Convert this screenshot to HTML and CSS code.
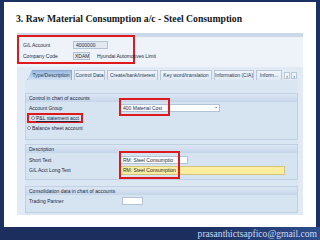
FILE: index.html
```html
<!DOCTYPE html>
<html lang="en">
<head>
    <meta charset="UTF-8">
    <title>Raw Material Consumption a/c - Steel Consumption</title>
    <link rel="stylesheet" href="styles.css">
</head>
<body>
    <div class="slide">
        <h1 class="title">3. Raw Material Consumption a/c - Steel Consumption</h1>

        <div class="sap">
            <div class="sap-head">
                <div class="head-box">
                    <div class="hrow"><span class="hlbl">G/L Account</span><span class="fld ro w35">4000000</span></div>
                    <div class="hrow"><span class="hlbl">Company Code</span><span class="fld ro w17">XDAM</span><span class="hdesc">Hyundai Automotives Limit</span></div>
                </div>
            </div>

            <div class="tabs">
                <div class="tab active t1">Type/Description</div>
                <div class="tab t2">Control Data</div>
                <div class="tab t3">Create/bank/interest</div>
                <div class="tab t4">Key word/translation</div>
                <div class="tab t5">Information (C/A)</div>
                <div class="tab t6">Inform...</div>
                <div class="tab-nav"><span>‹</span><span>›</span></div>
            </div>

            <div class="panel">
                <div class="grp g1">
                    <div class="grp-title">Control in chart of accounts</div>
                    <div class="grp-body">
                        <div class="row"><span class="lbl">Account Group</span>
                            <span class="select">400 Material Cost<span class="arrow">▪</span><span class="mark mark-ag"></span></span>
                        </div>
                        <div class="row radio-row"><span class="pl"><span class="radio on"></span><u>P&amp;L statement acct</u></span></div>
                        <div class="row radio-row"><span class="radio"></span>Balance sheet account</div>
                    </div>
                </div>

                <div class="grp g2">
                    <div class="grp-title">Description</div>
                    <div class="grp-body">
                        <div class="row"><span class="lbl">Short Text</span><span class="fld short">RM: Steel Consumptio</span></div>
                        <div class="row"><span class="lbl">G/L Acct Long Text</span><span class="fld long">RM: Steel Consumption</span></div>
                    </div>
                    <span class="mark mark-desc"></span>
                </div>

                <div class="grp g3">
                    <div class="grp-title">Consolidation data in chart of accounts</div>
                    <div class="grp-body">
                        <div class="row"><span class="lbl">Trading Partner</span><span class="fld partner"></span></div>
                    </div>
                </div>
            </div>
        </div>
    </div>

    <div class="footer">prasanthictsapfico@gmail.com</div>
</body>
</html>
```

FILE: styles.css
```css
* {
    box-sizing: border-box;
    margin: 0;
    padding: 0;
}
html, body {
    width: 320px;
    height: 240px;
    overflow: hidden;
}
body {
    background: #1c3062;
    font-family: "Liberation Sans", Arial, sans-serif;
}
.slide {
    margin: 2px 4px 0;
    height: 225px;
    background: #fff;
    padding-top: 12px;
}
.title {
    font: bold 9.7px/10px "Liberation Serif", serif;
    color: #161616;
    padding-left: 12px;
    white-space: nowrap;
}

/* sap screenshot */
.sap {
    margin: 9px 0 0 13px;
    width: 286px;
    height: 182px;
    background: #e2ebf5;
    font-size: 5px;
    color: #1f2b3c;
    white-space: nowrap;
}
.sap-head {
    height: 34px;
    padding-top: 2px;
    background: linear-gradient(#cbd9ea 0 4px, #eef3f9 4px);
}
.head-box {
    width: 118px;
    height: 29px;
    border: 2px solid #e0191f;
    padding: 2px 0 0 4px;
}
.hrow {
    display: flex;
    align-items: center;
    height: 11px;
}
.hrow > span,
.row > span {
    flex-shrink: 0;
}
.hlbl {
    width: 50px;
}
.fld {
    height: 8px;
    line-height: 6px;
    padding: 0 2px;
    border: 1px solid #b3c2d4;
    background: #fff;
    white-space: nowrap;
    overflow: hidden;
}
.fld.ro {
    background: #e3e9f0;
}
.w35 { width: 35px; }
.w17 { width: 17px; padding: 0 1px; }
.hdesc {
    margin-left: 7px;
}

/* tabs */
.tabs {
    display: flex;
    gap: 2px;
    height: 10px;
    margin-top: 3px;
    padding-left: 10px;
}
.tab {
    height: 10px;
    line-height: 9px;
    text-align: center;
    overflow: hidden;
    background: linear-gradient(#f1f5fa, #dfe8f3);
    border: 1px solid #b7c8dd;
    border-bottom: none;
    color: #2b3b52;
}
.tab.active {
    background: linear-gradient(#9dbbe2, #cfdff2);
    border-color: #8eaad0;
    clip-path: polygon(5px 0, 100% 0, 100% 100%, 0 100%);
    padding-left: 3px;
}
.t1 { width: 45px; }
.t2 { width: 31px; }
.t3 { width: 51px; }
.t4 { width: 52px; }
.t5 { width: 40px; }
.t6 { width: 26px; }
.tab-nav {
    display: flex;
    gap: 1px;
    margin-top: 2px;
}
.tab-nav span {
    width: 6px;
    height: 7px;
    line-height: 6px;
    text-align: center;
    background: #f3f6fa;
    border: 1px solid #b7c8dd;
    font-size: 5px;
}

/* panel */
.panel {
    height: 135px;
    margin: 0 5px 0 8px;
    padding-top: 13px;
    background: #dae6f2;
}
.grp {
    position: relative;
    background: #d6e3f1;
    border: 1px solid #c1d1e5;
}
.g2 { margin-top: 4px; }
.g3 { margin-top: 6px; }
.grp-title {
    height: 8px;
    line-height: 8px;
    padding-left: 3px;
    background: linear-gradient(#dde7f3, #c5d5ea);
}
.g1 .grp-body { padding: 1px 0 6px; }
.g2 .grp-body { padding: 2px 0 4px; }
.g3 .grp-body { padding: 1px 0 6px; }
.row {
    display: flex;
    align-items: center;
    height: 10px;
    padding-left: 3px;
}
.lbl {
    width: 91px;
}
.select {
    position: relative;
    width: 100px;
    height: 8px;
    line-height: 6px;
    padding-left: 2px;
    background: #fff;
    border: 1px solid #b3c2d4;
}
.arrow {
    position: absolute;
    right: 2px;
    top: 0;
    font-size: 4px;
    color: #333;
}
.mark {
    position: absolute;
    border: 2px solid #e0191f;
}
.mark-ag {
    left: -2px;
    top: -7px;
    width: 51px;
    height: 18px;
}
.mark-desc {
    left: 93px;
    top: 6px;
    width: 61px;
    height: 28px;
}
.radio-row {
    padding-left: 1px;
}
.pl {
    display: flex;
    align-items: center;
    height: 10px;
    padding: 0 2px;
    border: 2px solid #e0191f;
}
.radio {
    width: 4px;
    height: 4px;
    margin-right: 1px;
    border-radius: 50%;
    border: 1px solid #7d8ea6;
    background: #fff;
}
.radio.on {
    background: radial-gradient(#1f3a66 40%, #fff 50%);
}
.fld.short {
    width: 68px;
}
.fld.long {
    width: 165px;
    height: 9px;
    line-height: 7px;
    background: #fcee9e;
    border-color: #d4c47e;
}
.fld.partner {
    width: 21px;
    margin-left: 2px;
}

.footer {
    height: 13px;
    padding-right: 3px;
    text-align: right;
    font: 9.6px/13px "Liberation Serif", serif;
    color: #cfd9ee;
    background: linear-gradient(90deg, #1b2e5e 60%, #2d4d8c);
}
```
